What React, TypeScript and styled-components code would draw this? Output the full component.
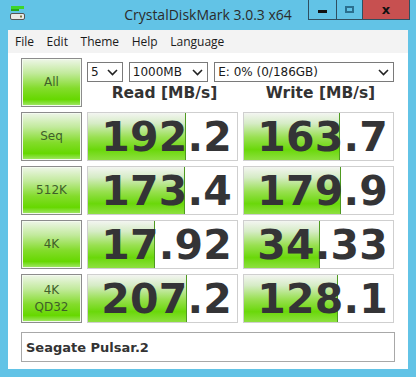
import React from 'react';
import styled, { createGlobalStyle } from 'styled-components';

const Global = createGlobalStyle`
  html, body {
    margin: 0;
    padding: 0;
    background: #62c3e6;
  }
  * {
    box-sizing: border-box;
  }
`;

const Frame = styled.div`
  width: 416px;
  height: 377px;
  background: #62c3e6;
  padding: 0 8px 8px 8px;
  display: flex;
  flex-direction: column;
  font-family: 'Open Sans', 'DejaVu Sans', sans-serif;
  overflow: hidden;
`;

const TitleBar = styled.div`
  height: 30px;
  display: flex;
  align-items: flex-start;
  position: relative;
`;

const AppIcon = styled.svg`
  margin: 6px 0 0 2px;
`;

const Title = styled.div`
  position: absolute;
  left: 0;
  right: 0;
  top: 5px;
  text-align: center;
  font-size: 14px;
  color: #2b2b2b;
  pointer-events: none;
`;

const WinButtons = styled.div`
  margin-left: auto;
  margin-right: -2px;
  display: flex;
  height: 20px;
  border: 1px solid #2f4f60;
  border-top: none;
`;

const WinButton = styled.div<{ $w: number; $close?: boolean }>`
  width: ${(p) => p.$w}px;
  height: 100%;
  display: flex;
  align-items: center;
  justify-content: center;
  background: ${(p) => (p.$close ? '#c75050' : 'transparent')};
  & + & {
    border-left: 1px solid #2f4f60;
  }
`;

const MinGlyph = styled.div`
  width: 9px;
  height: 3px;
  background: #111;
  margin-top: 4px;
`;

const MaxGlyph = styled.div`
  width: 9px;
  height: 7px;
  border: 2px solid #2a6f8e;
`;

const CloseGlyph = styled.span`
  font-family: 'DejaVu Sans', sans-serif;
  font-weight: bold;
  font-size: 13px;
  color: #111;
  line-height: 1;
`;

const MenuBar = styled.div`
  height: 23px;
  background: #f3f3f3;
  display: flex;
  align-items: center;
  padding-left: 7px;
  gap: 12.6px;
`;

const MenuItem = styled.span`
  font-size: 12px;
  color: #1a1a1a;
`;

const Client = styled.div`
  flex: 1;
  background: #fff;
  padding: 5px 14px 7px 13px;
`;

const Grid = styled.div`
  display: grid;
  grid-template-columns: 61px 151px 151px;
  grid-auto-rows: 49px;
  gap: 5px;
`;

const TestButton = styled.div`
  border: 1px solid #8c8c8c;
  box-shadow: inset 0 0 0 1px #f4fbef;
  background: linear-gradient(
    to bottom,
    #eef6e8 0%,
    #c2ea9c 30%,
    #84dc2c 62%,
    #66d800 86%,
    #a6e870 100%
  );
  display: flex;
  flex-direction: column;
  align-items: center;
  justify-content: center;
  font-family: 'DejaVu Sans', sans-serif;
  font-size: 12px;
  line-height: 17px;
  color: #3f5f2a;
`;

const TopArea = styled.div`
  grid-column: 2 / 4;
  display: flex;
  flex-direction: column;
  padding-top: 4px;
`;

const Selects = styled.div`
  display: flex;
  gap: 6px;
  height: 20px;
`;

const Select = styled.div<{ $w: number }>`
  width: ${(p) => p.$w}px;
  height: 20px;
  border: 1px solid #7a7a7a;
  background: #fff;
  display: flex;
  align-items: center;
  justify-content: space-between;
  padding: 0 4px 0 3px;
  font-family: 'DejaVu Sans', sans-serif;
  font-size: 12px;
  color: #1a1a1a;
`;

const Headers = styled.div`
  display: grid;
  grid-template-columns: 151px 151px;
  column-gap: 5px;
  margin-top: 2px;
`;

const Header = styled.div`
  text-align: center;
  font-family: 'DejaVu Sans', sans-serif;
  font-weight: bold;
  font-size: 15.5px;
  color: #333;
  padding-left: 4px;
`;

const Cell = styled.div`
  position: relative;
  border: 1px solid #cfcfcf;
  background: #fff;
  overflow: hidden;
`;

const Bar = styled.div`
  position: absolute;
  left: 0;
  top: 0;
  bottom: 0;
  border-right: 1px solid #4e9a20;
  background: linear-gradient(
    to bottom,
    #f3f5f1 0%,
    #d6ecc6 22%,
    #98e050 52%,
    #6ad80a 78%,
    #8ee040 100%
  );
`;

const Value = styled.div`
  position: relative;
  height: 100%;
  display: flex;
  align-items: center;
  justify-content: flex-end;
  padding-right: 5px;
  font-family: 'DejaVu Sans', sans-serif;
  font-weight: bold;
  font-size: 41px;
  letter-spacing: 0.2px;
  color: #343436;
`;

const Status = styled.div`
  margin-top: 9px;
  width: 374px;
  height: 30px;
  border: 1px solid #a8a8a8;
  display: flex;
  align-items: center;
  padding-left: 4px;
  font-family: 'DejaVu Sans', sans-serif;
  font-weight: bold;
  font-size: 13px;
  color: #333;
`;

const Chevron = () => (
  <svg width="11" height="7" viewBox="0 0 11 7">
    <path d="M1 1 L5.5 5.5 L10 1" fill="none" stroke="#222" strokeWidth="1.6" />
  </svg>
);

const rows = [
  { label: ['Seq'], read: '192.2', rw: 98, write: '163.7', ww: 96 },
  { label: ['512K'], read: '173.4', rw: 97, write: '179.9', ww: 97 },
  { label: ['4K'], read: '17.92', rw: 67, write: '34.33', ww: 76 },
  { label: ['4K', 'QD32'], read: '207.2', rw: 99, write: '128.1', ww: 94 },
];

export default function App() {
  return (
    <>
      <Global />
      <Frame>
        <TitleBar>
          <AppIcon width="16" height="15" viewBox="0 0 16 15">
            <rect x="1" y="0" width="13" height="3" fill="#3dd62a" />
            <rect x="1" y="3" width="8" height="2" fill="#25a818" />
            <rect x="0.5" y="7.5" width="14" height="6" rx="1.5" fill="#e8e8e8" stroke="#555" />
            <rect x="10" y="9.5" width="2" height="2" fill="#7c7c40" />
          </AppIcon>
          <Title>CrystalDiskMark 3.0.3 x64</Title>
          <WinButtons>
            <WinButton $w={27}>
              <MinGlyph />
            </WinButton>
            <WinButton $w={26}>
              <MaxGlyph />
            </WinButton>
            <WinButton $w={47} $close>
              <CloseGlyph>x</CloseGlyph>
            </WinButton>
          </WinButtons>
        </TitleBar>
        <MenuBar>
          <MenuItem>File</MenuItem>
          <MenuItem>Edit</MenuItem>
          <MenuItem>Theme</MenuItem>
          <MenuItem>Help</MenuItem>
          <MenuItem>Language</MenuItem>
        </MenuBar>
        <Client>
          <Grid>
            <TestButton>All</TestButton>
            <TopArea>
              <Selects>
                <Select $w={36}>
                  5 <Chevron />
                </Select>
                <Select $w={80}>
                  1000MB <Chevron />
                </Select>
                <Select $w={181}>
                  E: 0% (0/186GB) <Chevron />
                </Select>
              </Selects>
              <Headers>
                <Header>Read [MB/s]</Header>
                <Header>Write [MB/s]</Header>
              </Headers>
            </TopArea>
            {rows.map((r) => (
              <React.Fragment key={r.label.join()}>
                <TestButton>
                  {r.label.map((l) => (
                    <span key={l}>{l}</span>
                  ))}
                </TestButton>
                <Cell>
                  <Bar style={{ width: r.rw }} />
                  <Value>{r.read}</Value>
                </Cell>
                <Cell>
                  <Bar style={{ width: r.ww }} />
                  <Value>{r.write}</Value>
                </Cell>
              </React.Fragment>
            ))}
          </Grid>
          <Status>Seagate Pulsar.2</Status>
        </Client>
      </Frame>
    </>
  );
}
